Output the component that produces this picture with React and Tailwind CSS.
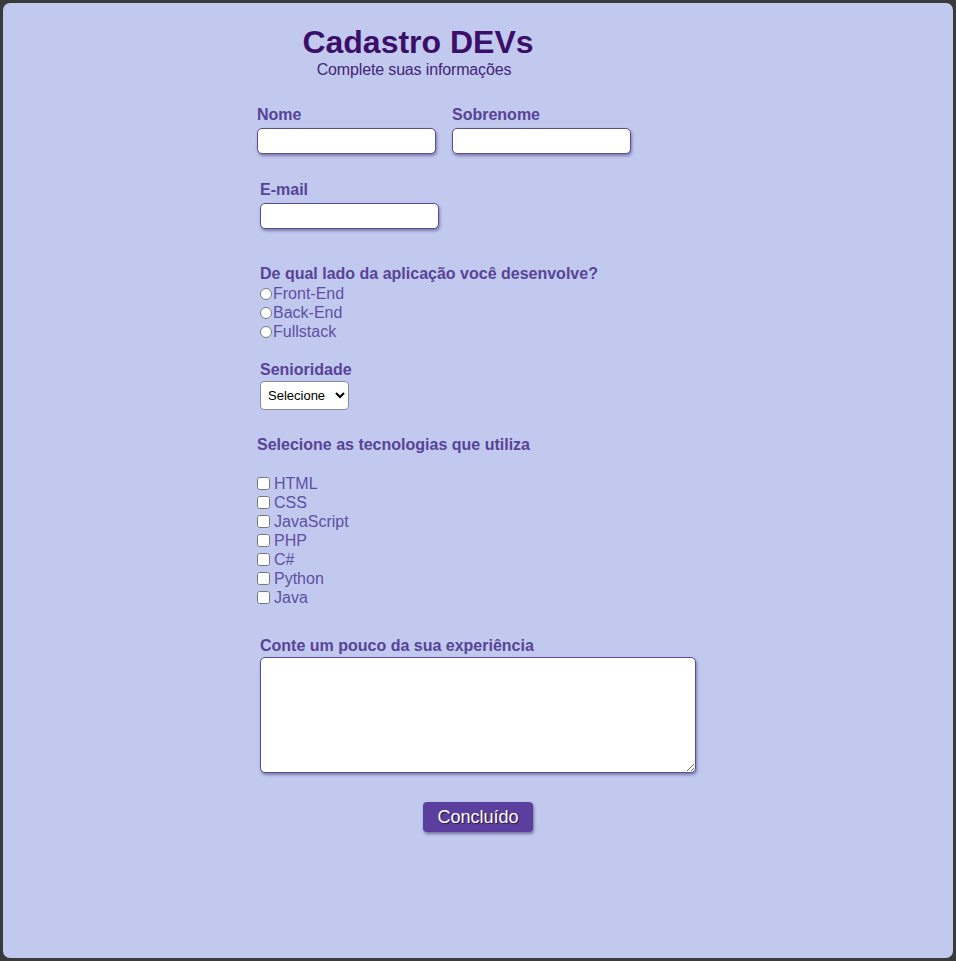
import React from 'react';

const techs = ['HTML', 'CSS', 'JavaScript', 'PHP', 'C#', 'Python', 'Java'];
const sides = ['Front-End', 'Back-End', 'Fullstack'];

const inputClass =
  'h-[26px] w-[179px] bg-white border border-[#5a4b94] rounded-[5px] shadow-[1px_2px_3px_rgba(40,30,90,0.45)] outline-none';

export default function App() {
  return (
    <div className="min-h-[961px] bg-[#3a3a3a] p-[3px] font-['Liberation_Sans',Arial,sans-serif]">
      <div className="h-[955px] w-[950px] bg-[#c2c9ee] rounded-[7px] pt-[21px]">
        <div className="ml-[254px] w-[322px] text-center">
          <h1 className="text-[32px] leading-[37px] font-bold text-[#3b0f69]">Cadastro DEVs</h1>
          <p className="text-[16px] leading-[18px] text-[#44237a] pr-[8px] tracking-[-0.15px]">Complete suas informações</p>
        </div>

        <form className="ml-[254px] mt-[27px] text-[#584399]">
          <div className="flex gap-[16px]">
            <div>
              <label className="block text-[16px] leading-[18px] font-bold">Nome</label>
              <input type="text" className={`${inputClass} mt-[4px]`} />
            </div>
            <div>
              <label className="block text-[16px] leading-[18px] font-bold">Sobrenome</label>
              <input type="text" className={`${inputClass} mt-[4px]`} />
            </div>
          </div>

          <div className="ml-[3px] mt-[27px]">
            <label className="block text-[16px] leading-[18px] font-bold">E-mail</label>
            <input type="email" className={`${inputClass} mt-[4px]`} />
          </div>

          <div className="ml-[3px] mt-[36px]">
            <p className="text-[16px] leading-[18px] font-bold">De qual lado da aplicação você desenvolve?</p>
            <div className="mt-[1px]">
              {sides.map((s) => (
                <label key={s} className="flex items-center h-[19px] text-[16px] text-[#5e4fa6]">
                  <input type="radio" name="lado" className="m-0 mr-[1px] w-[12px] h-[12px]" />
                  {s}
                </label>
              ))}
            </div>
          </div>

          <div className="ml-[3px] mt-[20px]">
            <label className="block text-[16px] leading-[18px] font-bold">Senioridade</label>
            <select className="mt-[2px] h-[29px] w-[89px] px-[3px] bg-white border border-[#8c8aa0] rounded-[4px] text-[13px] text-black">
              <option>Selecione</option>
              <option>Júnior</option>
              <option>Pleno</option>
              <option>Sênior</option>
            </select>
          </div>

          <div className="mt-[26px]">
            <p className="text-[16px] leading-[18px] font-bold">Selecione as tecnologias que utiliza</p>
            <div className="mt-[20px]">
              {techs.map((t) => (
                <label key={t} className="flex items-center gap-[4px] h-[19px] text-[16px] text-[#5e4fa6]">
                  <input type="checkbox" className="m-0 w-[13px] h-[13px]" />
                  {t}
                </label>
              ))}
            </div>
          </div>

          <div className="ml-[3px] mt-[30px]">
            <label className="block text-[16px] leading-[18px] font-bold">Conte um pouco da sua experiência</label>
            <textarea className="mt-[2px] block h-[116px] w-[436px] bg-white border border-[#5a4b94] rounded-[5px] shadow-[1px_2px_3px_rgba(40,30,90,0.45)] outline-none" />
          </div>
        </form>

        <div className="flex justify-center mt-[29px]">
          <button className="h-[30px] w-[110px] bg-[#5a3f9f] text-white text-[18px] rounded-[4px] shadow-[1px_2px_3px_rgba(40,30,90,0.5)] [text-shadow:1px_1px_1px_rgba(0,0,0,0.6)]">
            Concluído
          </button>
        </div>
      </div>
    </div>
  );
}
